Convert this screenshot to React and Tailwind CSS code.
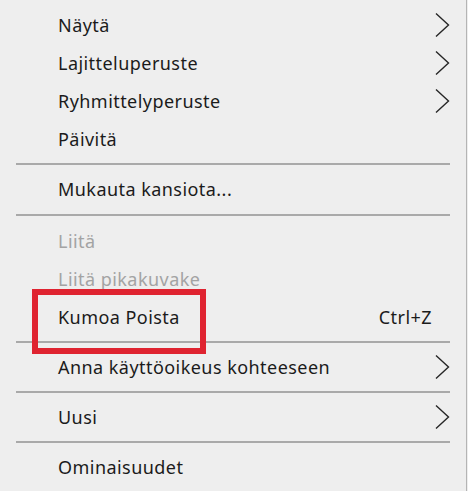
import React from 'react';

const Chevron = () => (
  <svg width="16" height="26" viewBox="0 0 16 26" fill="none" className="shrink-0">
    <polyline points="2,1.5 14.5,13 2,24.5" stroke="#262626" strokeWidth="1.4" strokeLinejoin="miter" />
  </svg>
);

const Item = ({ label, disabled, shortcut, submenu }) => (
  <div className="flex h-[38px] items-center pl-[58px] pr-[16px]">
    <span className={`flex-1 ${disabled ? 'text-[#a3a3a3]' : 'text-[#1b1b1b]'}`}>{label}</span>
    {shortcut && <span className="mr-[18px] text-[#1b1b1b]">{shortcut}</span>}
    {submenu && <Chevron />}
  </div>
);

const Separator = ({ tall }) => (
  <div className={`flex items-center pl-[16px] pr-[16px] ${tall ? 'h-[14px]' : 'h-[12px]'}`}>
    <div className="h-[2px] w-full bg-[#a9a9a9]" />
  </div>
);

export default function App() {
  return (
    <div className="relative flex h-[491px] w-[468px] bg-[#eeeeee]" style={{ fontFamily: '"Noto Sans", "Open Sans", sans-serif' }}>
      <div className="w-[467px] border-r border-[#b4b4b4] pt-[6px] text-[18px] tracking-[0.45px]">
        <Item label="Näytä" submenu />
        <Item label="Lajitteluperuste" submenu />
        <Item label="Ryhmittelyperuste" submenu />
        <Item label="Päivitä" />
        <Separator />
        <Item label="Mukauta kansiota..." />
        <Separator tall />
        <Item label="Liitä" disabled />
        <Item label="Liitä pikakuvake" disabled />
        <Item label="Kumoa Poista" shortcut="Ctrl+Z" />
        <Separator />
        <Item label="Anna käyttöoikeus kohteeseen" submenu />
        <Separator />
        <Item label="Uusi" submenu />
        <Separator />
        <Item label="Ominaisuudet" />
      </div>
      <div className="absolute left-[32px] top-[289px] h-[65px] w-[174px] border-[6px] border-[#df2330]" />
    </div>
  );
}
